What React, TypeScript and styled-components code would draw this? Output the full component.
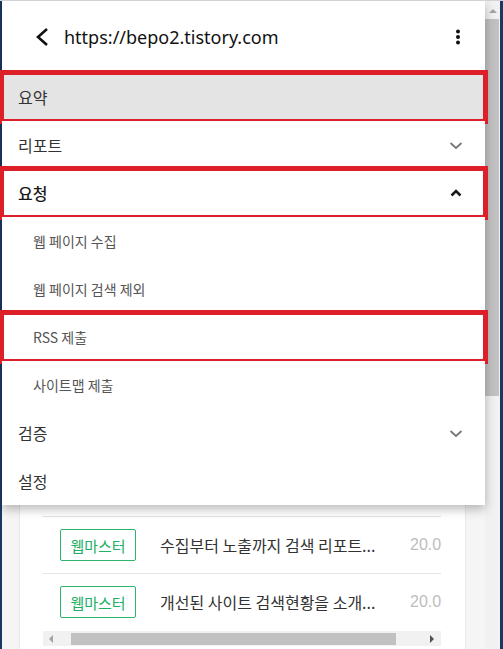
import React from 'react';
import styled, { createGlobalStyle } from 'styled-components';

const GlobalStyle = createGlobalStyle`
    html, body {
        margin: 0;
        padding: 0;
    }

    body {
        font-family: "Noto Sans CJK KR", "Noto Sans", sans-serif;
        color: #333;
    }
`;

const SFrame = styled.div`
    position: relative;
    width: 503px;
    height: 649px;
    display: flex;
    box-sizing: border-box;
    padding: 0 3px 0 2px;
    background: #1b3863;
    border-top: 1px solid #cfd3d8;
    overflow: hidden;
`;

const SPage = styled.div`
    flex: 1;
    min-width: 0;
    display: flex;
    flex-direction: column;
    background: #f5f5f5;
`;

const SCard = styled.div`
    margin: 0 19px 0 17px;
    flex: 1;
    min-width: 0;
    overflow: hidden;
    background: #fff;
    border-left: 1px solid #e8e8e8;
    border-right: 1px solid #e8e8e8;
    padding: 515px 24px 0 23px;
`;

const SNoticeRow = styled.div`
    height: 56px;
    display: flex;
    align-items: center;
    border-top: 1px solid #e4e4e4;
    white-space: nowrap;
    overflow: hidden;
`;

const STag = styled.span`
    flex-shrink: 0;
    margin-left: 17px;
    width: 74px;
    height: 30px;
    display: flex;
    align-items: center;
    justify-content: center;
    border: 1px solid #2eb46d;
    border-radius: 2px;
    color: #22b064;
    font-size: 15px;
`;

const SNoticeTitle = styled.span`
    flex-shrink: 0;
    margin-left: 24px;
    width: 226px;
    font-size: 16px;
    color: #333;
`;

const SNoticeDate = styled.span`
    flex-shrink: 0;
    margin-left: 24px;
    font-size: 16px;
    color: #bdbdbd;
    font-family: "Liberation Sans", Arial, sans-serif;
`;

const SHScroll = styled.div`
    height: 15px;
    display: flex;
    align-items: center;
    background: #f1f1f1;
    margin-top: 1px;
`;

const SHThumb = styled.div`
    margin-left: 18px;
    width: 325px;
    height: 12px;
    background: #c1c1c1;
`;

const SArrow = styled.span<{ $dir: 'left' | 'right' | 'up'; $dark?: boolean }>`
    width: 0;
    height: 0;
    border-style: solid;
    border-color: transparent;
    ${({ $dir, $dark }) => {
        const c = $dark ? '#505050' : '#a3a3a3';
        if ($dir === 'left') return `border-width: 4px 4px 4px 0; border-right-color: ${c}; margin-left: 6px;`;
        if ($dir === 'right') return `border-width: 4px 0 4px 4px; border-left-color: ${c}; margin-left: auto; margin-right: 7px;`;
        return `border-width: 0 4px 4px 4px; border-bottom-color: ${c}; margin: 8px auto 0;`;
    }}
`;

const SVScroll = styled.div`
    width: 15px;
    flex-shrink: 0;
    display: flex;
    flex-direction: column;
    background: #f1f1f1;
`;

const SVThumb = styled.div`
    margin: 6px 1px 0 0;
    height: 377px;
    background: #c1c1c1;
`;

const SDrawer = styled.nav`
    position: absolute;
    top: 0;
    left: 2px;
    width: 483px;
    background: #fff;
    box-shadow: 0 4px 10px rgba(0, 0, 0, 0.28);
    z-index: 2;
`;

const SHeader = styled.header`
    height: 72px;
    display: flex;
    align-items: center;
    padding: 0 17px 0 31px;
`;

const SUrl = styled.h1`
    margin: 0 0 0 13px;
    flex: 1;
    font-family: "Noto Sans", sans-serif;
    font-size: 18px;
    font-weight: 400;
    color: #111;
`;

const SIconButton = styled.span`
    display: flex;
    align-items: center;
    justify-content: center;
`;

const SList = styled.ul`
    list-style: none;
    margin: 0;
    padding: 0;
`;

const SItem = styled.li<{ $sub?: boolean; $active?: boolean; $open?: boolean; $marked?: boolean }>`
    height: 48px;
    display: flex;
    align-items: center;
    padding: 0 17px 0 ${({ $sub }) => ($sub ? '31px' : '16px')};
    font-size: ${({ $sub }) => ($sub ? '14px' : '16px')};
    color: ${({ $sub, $open }) => ($sub ? '#555' : $open ? '#1a1a1a' : '#333')};
    font-weight: ${({ $open }) => ($open ? 500 : 400)};
    background: ${({ $active }) => ($active ? '#e4e4e4' : '#fff')};
    outline: ${({ $marked }) => ($marked ? '5px solid #dd1f2a' : 'none')};
    outline-offset: -2px;
    position: relative;

    > span {
        flex: 1;
    }
`;

const BackIcon = () => (
    <svg width="18" height="18" viewBox="0 0 18 18">
        <path d="M14 1 L5 9 L14 17" fill="none" stroke="#111" strokeWidth="2.6" />
    </svg>
);

const MoreIcon = () => (
    <svg width="20" height="20" viewBox="0 0 20 20">
        <circle cx="10" cy="4.5" r="2" fill="#111" />
        <circle cx="10" cy="10" r="2" fill="#111" />
        <circle cx="10" cy="15.5" r="2" fill="#111" />
    </svg>
);

const Chevron = ({ up }: { up?: boolean }) => (
    <svg width="24" height="24" viewBox="0 0 24 24">
        {up ? (
            <path d="M7.5 14.5 L12 10 L16.5 14.5" fill="none" stroke="#1a1a1a" strokeWidth="2.6" />
        ) : (
            <path d="M6.5 10 L12 15 L17.5 10" fill="none" stroke="#777" strokeWidth="1.8" />
        )}
    </svg>
);

const notices = [
    { title: '수집부터 노출까지 검색 리포트...', date: '20.09.24' },
    { title: '개선된 사이트 검색현황을 소개...', date: '20.09.10' },
];

export default function App() {
    return (
        <>
            <GlobalStyle />
            <SFrame>
                <SPage>
                    <SCard>
                        {notices.map((n) => (
                            <SNoticeRow key={n.title}>
                                <STag>웹마스터</STag>
                                <SNoticeTitle>{n.title}</SNoticeTitle>
                                <SNoticeDate>{n.date}</SNoticeDate>
                            </SNoticeRow>
                        ))}
                        <SHScroll>
                            <SArrow $dir="left" />
                            <SHThumb />
                            <SArrow $dir="right" $dark />
                        </SHScroll>
                    </SCard>
                </SPage>
                <SVScroll>
                    <SArrow $dir="up" />
                    <SVThumb />
                </SVScroll>

                <SDrawer>
                    <SHeader>
                        <SIconButton>
                            <BackIcon />
                        </SIconButton>
                        <SUrl>https://bepo2.tistory.com</SUrl>
                        <SIconButton>
                            <MoreIcon />
                        </SIconButton>
                    </SHeader>
                    <SList>
                        <SItem $active $marked>
                            <span>요약</span>
                        </SItem>
                        <SItem>
                            <span>리포트</span>
                            <Chevron />
                        </SItem>
                        <SItem $open $marked>
                            <span>요청</span>
                            <Chevron up />
                        </SItem>
                        <SItem $sub>
                            <span>웹 페이지 수집</span>
                        </SItem>
                        <SItem $sub>
                            <span>웹 페이지 검색 제외</span>
                        </SItem>
                        <SItem $sub $marked>
                            <span>RSS 제출</span>
                        </SItem>
                        <SItem $sub>
                            <span>사이트맵 제출</span>
                        </SItem>
                        <SItem>
                            <span>검증</span>
                            <Chevron />
                        </SItem>
                        <SItem>
                            <span>설정</span>
                        </SItem>
                    </SList>
                </SDrawer>
            </SFrame>
        </>
    );
}
